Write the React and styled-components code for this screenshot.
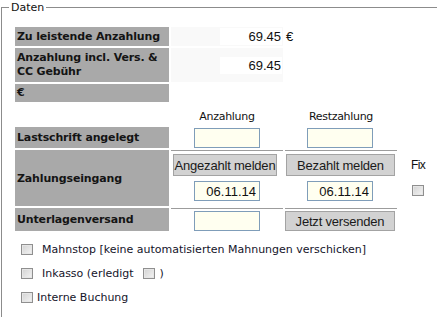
import React from "react"
import styled, { createGlobalStyle } from "styled-components"

const GlobalStyle = createGlobalStyle`
  html, body {
    margin: 0;
    padding: 0;
    background: #fff;
    overflow: hidden;
  }
  body {
    font-family: "DejaVu Sans", Verdana, sans-serif;
    font-size: 11px;
    color: #111;
  }
`

// open to the right and bottom, the frame carries on past the crop
const Fieldset = styled.fieldset`
  margin: 1px 0 0 1px;
  padding: 11px 0 0 11px;
  width: 436px;
  height: 316px;
  border: 1px solid #8c8c8c;
  border-right: none;
  border-bottom: none;
  box-sizing: border-box;
`

const Legend = styled.legend`
  margin-left: -4px;
  padding: 0 2px;
  font-size: 11px;
  line-height: 13px;
  color: #111;
`

const Table = styled.table`
  width: 422px;
  border-collapse: separate;
  border-spacing: 2px;
  table-layout: fixed;
`

const Label = styled.th`
  width: 150px;
  height: ${props => props.$h}px;
  padding: 0 2px;
  background: #a9a9a9;
  text-align: left;
  vertical-align: middle;
  white-space: nowrap;
  font-weight: bold;
  font-size: 11px;
  line-height: 14px;
  letter-spacing: -0.15px;
  color: #141414;
  border-top: ${props => (props.$ruled ? "1px solid #a9a9a9" : "none")};
`

const Cell = styled.td`
  width: 112px;
  padding: 0;
  background: ${props => (props.$shade ? "#f9f9f9" : "transparent")};
  text-align: ${props => props.$align || "left"};
  vertical-align: ${props => props.$valign || "middle"};
  border-top: ${props => (props.$ruled ? "1px solid #9c9c9c" : "none")};
`

const FixCell = styled.td`
  width: 28px;
  padding: 0 0 0 10px;
  vertical-align: top;
`

const Head = styled.div`
  text-align: center;
  font-size: 11px;
  letter-spacing: -0.3px;
  line-height: 13px;
  padding-top: 3px;
`

const Amount = styled.input`
  width: 62px;
  height: 17px;
  margin-right: 1px;
  padding: 0 1px 0 0;
  border: none;
  background: #fff;
  text-align: right;
  font-family: "Liberation Sans", Arial, sans-serif;
  font-size: 13px;
  color: #111;
  box-sizing: border-box;
  vertical-align: middle;
`

const Euro = styled.span`
  padding-left: 1px;
  font-family: "Liberation Sans", Arial, sans-serif;
  font-size: 13px;
`

const Field = styled.input`
  display: block;
  width: 66px;
  height: 20px;
  margin: ${props => props.$m || "0 auto"};
  padding: 0 3px;
  border: 1px solid #7f9db9;
  background: #fffff0;
  text-align: right;
  font-family: "Liberation Sans", Arial, sans-serif;
  font-size: 13px;
  color: #111;
  box-sizing: border-box;
`

const Button = styled.button`
  display: block;
  width: ${props => props.$w}px;
  height: ${props => props.$h || 22}px;
  margin: ${props => props.$m || "0"};
  padding: 0;
  border: 1px solid #a3a3a3;
  background: #d2d2d2;
  font-family: "Liberation Sans", Arial, sans-serif;
  font-size: 13px;
  letter-spacing: -0.2px;
  color: #1a1a1a;
`

const FixLabel = styled.div`
  font-family: "Liberation Sans", Arial, sans-serif;
  font-size: 12px;
  letter-spacing: -0.6px;
  line-height: 14px;
  padding: 8px 0 0 2px;
`

const Check = styled.input.attrs({ type: "checkbox" })`
  appearance: none;
  width: 12px;
  height: 11px;
  margin: ${props => props.$m || "0"};
  border: 1px solid #8f8f8f;
  background: linear-gradient(135deg, #d2d2d2, #f4f4f4);
  box-shadow: inset 0 0 0 1px #e6e6e6;
  box-sizing: border-box;
  flex: none;
`

const Options = styled.div`
  display: flex;
  flex-direction: column;
  gap: 10px;
  padding: 9px 0 0 8px;
`

const Option = styled.label`
  display: flex;
  align-items: center;
  height: 14px;
  font-size: 11px;
  white-space: nowrap;
  color: #14142a;
`

const Gap = styled.span`
  display: inline-block;
  width: ${props => props.$w}px;
`

export default function App() {
  return (
    <>
      <GlobalStyle />
      <Fieldset>
        <Legend>Daten</Legend>
        <Table>
          <tbody>
            <tr>
              <Label $h={19}>Zu leistende Anzahlung</Label>
              <Cell $shade $align="right">
                <Amount readOnly value="69.45" />
              </Cell>
              <Cell>
                <Euro>€</Euro>
              </Cell>
              <td />
            </tr>
            <tr>
              <Label $h={34}>
                Anzahlung incl. Vers. &amp;
                <br />
                CC Gebühr
              </Label>
              <Cell $shade $align="right">
                <Amount readOnly value="69.45" />
              </Cell>
              <Cell />
              <td />
            </tr>
            <tr>
              <Label $h={18}>€</Label>
              <Cell />
              <Cell />
              <td />
            </tr>
            <tr>
              <td style={{ height: 19 }} />
              <Cell>
                <Head>Anzahlung</Head>
              </Cell>
              <Cell>
                <Head>Restzahlung</Head>
              </Cell>
              <td />
            </tr>
            <tr>
              <Label $h={21}>Lastschrift angelegt</Label>
              <Cell>
                <Field $m="0 0 0 23px" />
              </Cell>
              <Cell>
                <Field $m="0 0 0 22px" />
              </Cell>
              <td />
            </tr>
            <tr>
              <Label $h={55} $ruled>
                Zahlungseingang
              </Label>
              <Cell $ruled $valign="top">
                <Button $w={104} $m="3px 0 0 2px">
                  Angezahlt melden
                </Button>
                <Field $m="5px 0 0 23px" readOnly value="06.11.14" />
              </Cell>
              <Cell $ruled $valign="top">
                <Button $w={109} $m="3px 0 0 1px">
                  Bezahlt melden
                </Button>
                <Field $m="5px 0 0 22px" readOnly value="06.11.14" />
              </Cell>
              <FixCell>
                <FixLabel>Fix</FixLabel>
                <Check $m="13px 0 0 3px" />
              </FixCell>
            </tr>
            <tr>
              <Label $h={22} $ruled>
                Unterlagenversand
              </Label>
              <Cell $ruled $valign="top">
                <Field $m="2px 0 0 23px" />
              </Cell>
              <Cell $ruled $valign="top">
                <Button $w={110} $h={20} $m="2px 0 0 0">
                  Jetzt versenden
                </Button>
              </Cell>
              <td />
            </tr>
          </tbody>
        </Table>
        <Options>
          <Option>
            <Check />
            <Gap $w={9} />
            Mahnstop [keine automatisierten Mahnungen verschicken]
          </Option>
          <Option>
            <Check />
            <Gap $w={9} />
            Inkasso (erledigt
            <Gap $w={9} />
            <Check />
            <Gap $w={5} />)
          </Option>
          <Option>
            <Check />
            <Gap $w={4} />
            Interne Buchung
          </Option>
        </Options>
      </Fieldset>
    </>
  )
}
